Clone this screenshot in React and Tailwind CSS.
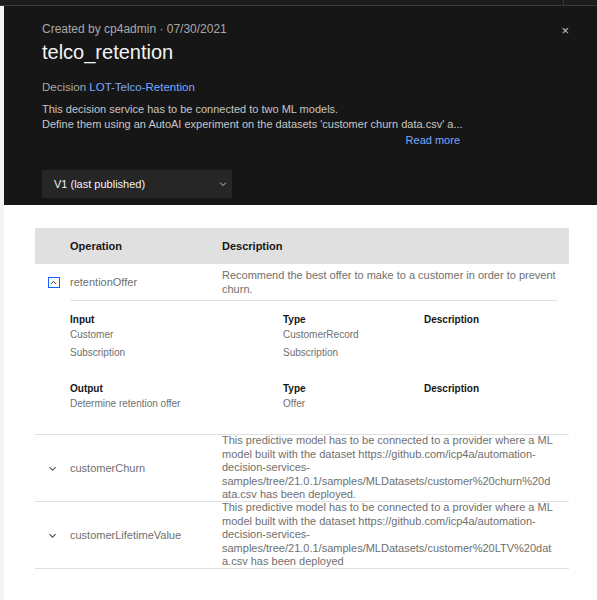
import React from 'react';

const font = { fontFamily: '"Liberation Sans", Arial, sans-serif' };

const Chevron = ({ up = false, className = '' }) => (
  <svg viewBox="0 0 16 16" className={className} fill="none" stroke="currentColor" strokeWidth="1.6">
    {up ? <path d="M3.5 10.5 8 6l4.5 4.5" /> : <path d="M3.5 6 8 10.5 12.5 6" />}
  </svg>
);

const churnLines = [
  'This predictive model has to be connected to a provider where a ML',
  'model built with the dataset https://github.com/icp4a/automation-',
  'decision-services-',
  'samples/tree/21.0.1/samples/MLDatasets/customer%20churn%20d',
  'ata.csv has been deployed.',
];

const ltvLines = [
  'This predictive model has to be connected to a provider where a ML',
  'model built with the dataset https://github.com/icp4a/automation-',
  'decision-services-',
  'samples/tree/21.0.1/samples/MLDatasets/customer%20LTV%20dat',
  'a.csv has been deployed',
];

const ModelRow = ({ name, lines }) => (
  <div className="flex items-center border-b border-[#e0e0e0] h-[67px] overflow-hidden">
    <div className="w-[35px] flex justify-center">
      <Chevron className="w-[11px] h-[11px] text-[#525252]" />
    </div>
    <div className="w-[152px] text-[11px] text-[#6f6f6f]">{name}</div>
    <div className="flex-1 text-[11px] leading-[13.5px] text-[#6f6f6f]">
      {lines.map((l) => (
        <div key={l} className="whitespace-nowrap">{l}</div>
      ))}
    </div>
  </div>
);

const cols = 'grid grid-cols-[213px_141px_1fr] leading-[16px]';

export default function App() {
  return (
    <div className="w-[597px] h-[600px] bg-[#f4f4f4] flex flex-col overflow-hidden" style={font}>
      <div className="h-[6px] bg-[#1c1c1c] border-b border-[#393939] relative shrink-0">
        <div className="absolute left-[563px] top-0 h-full w-px bg-[#393939]" />
      </div>
      <div className="flex-1 flex">
        <div className="w-[4px] bg-[#f4f4f4]" />
        <div className="flex-1 bg-white flex flex-col">
          <div className="bg-[#161616] h-[199px] px-[38px] relative">
            <button className="absolute right-[28px] top-[18px] text-[#c6c6c6] text-[13px] leading-none">×</button>
            <div className="mt-[15px] text-[12px] leading-[16px] text-[#a8a8a8]">Created by cp4admin · 07/30/2021</div>
            <div className="mt-[2px] text-[20px] leading-[26px] text-[#f4f4f4]">telco_retention</div>
            <div className="mt-[14px] text-[11.5px] leading-[16px] text-[#a8a8a8]">
              Decision <span className="text-[#78a9ff]">LOT-Telco-Retention</span>
            </div>
            <div className="w-[418px] mt-[7px] text-[11px] leading-[15px] text-[#c6c6c6]">
              <div>This decision service has to be connected to two ML models.</div>
              <div className="whitespace-nowrap">Define them using an AutoAI experiment on the datasets 'customer churn data.csv' a...</div>
              <div className="text-right text-[#78a9ff] mt-px">Read more</div>
            </div>
            <div className="mt-[22px] w-[190px] h-[28px] bg-[#262626] flex items-center justify-between pl-[12px] pr-[4px] text-[11px] text-[#f4f4f4]">
              <span>V1 (last published)</span>
              <Chevron className="w-[10px] h-[10px] text-[#c6c6c6]" />
            </div>
          </div>

          <div className="ml-[31px] w-[534px] mt-[23px]">
            <div className="h-[36px] bg-[#e0e0e0] flex items-center text-[11px] font-bold text-[#161616]">
              <div className="w-[35px]" />
              <div className="w-[152px]">Operation</div>
              <div>Description</div>
            </div>

            <div className="border-b border-[#e0e0e0]">
              <div className="flex items-center h-[36px]">
                <div className="w-[35px] flex justify-center pl-[2px]">
                  <div className="w-[12px] h-[11px] border border-[#0f62fe] flex items-center justify-center">
                    <Chevron up className="w-[9px] h-[9px] text-[#161616]" />
                  </div>
                </div>
                <div className="w-[152px] text-[11px] text-[#6f6f6f]">retentionOffer</div>
                <div className="flex-1 text-[11px] leading-[14px] text-[#6f6f6f] pr-[12px]">
                  Recommend the best offer to make to a customer in order to prevent churn.
                </div>
              </div>
              <div className="ml-[35px] mr-[12px] border-t border-[#e0e0e0] pt-[11px] pb-[22px] text-[10px] text-[#6f6f6f]">
                <div className={cols}>
                  <div className="font-bold text-[#161616]">Input</div>
                  <div className="font-bold text-[#161616]">Type</div>
                  <div className="font-bold text-[#161616]">Description</div>
                </div>
                <div className={`${cols} -mt-px`}>
                  <div>Customer</div>
                  <div>CustomerRecord</div>
                  <div />
                </div>
                <div className={`${cols} mt-[2px]`}>
                  <div>Subscription</div>
                  <div>Subscription</div>
                  <div />
                </div>
                <div className={`${cols} mt-[20px]`}>
                  <div className="font-bold text-[#161616]">Output</div>
                  <div className="font-bold text-[#161616]">Type</div>
                  <div className="font-bold text-[#161616]">Description</div>
                </div>
                <div className={`${cols} -mt-px`}>
                  <div>Determine retention offer</div>
                  <div>Offer</div>
                  <div />
                </div>
              </div>
            </div>

            <ModelRow name="customerChurn" lines={churnLines} />
            <ModelRow name="customerLifetimeValue" lines={ltvLines} />
          </div>
        </div>
      </div>
    </div>
  );
}
